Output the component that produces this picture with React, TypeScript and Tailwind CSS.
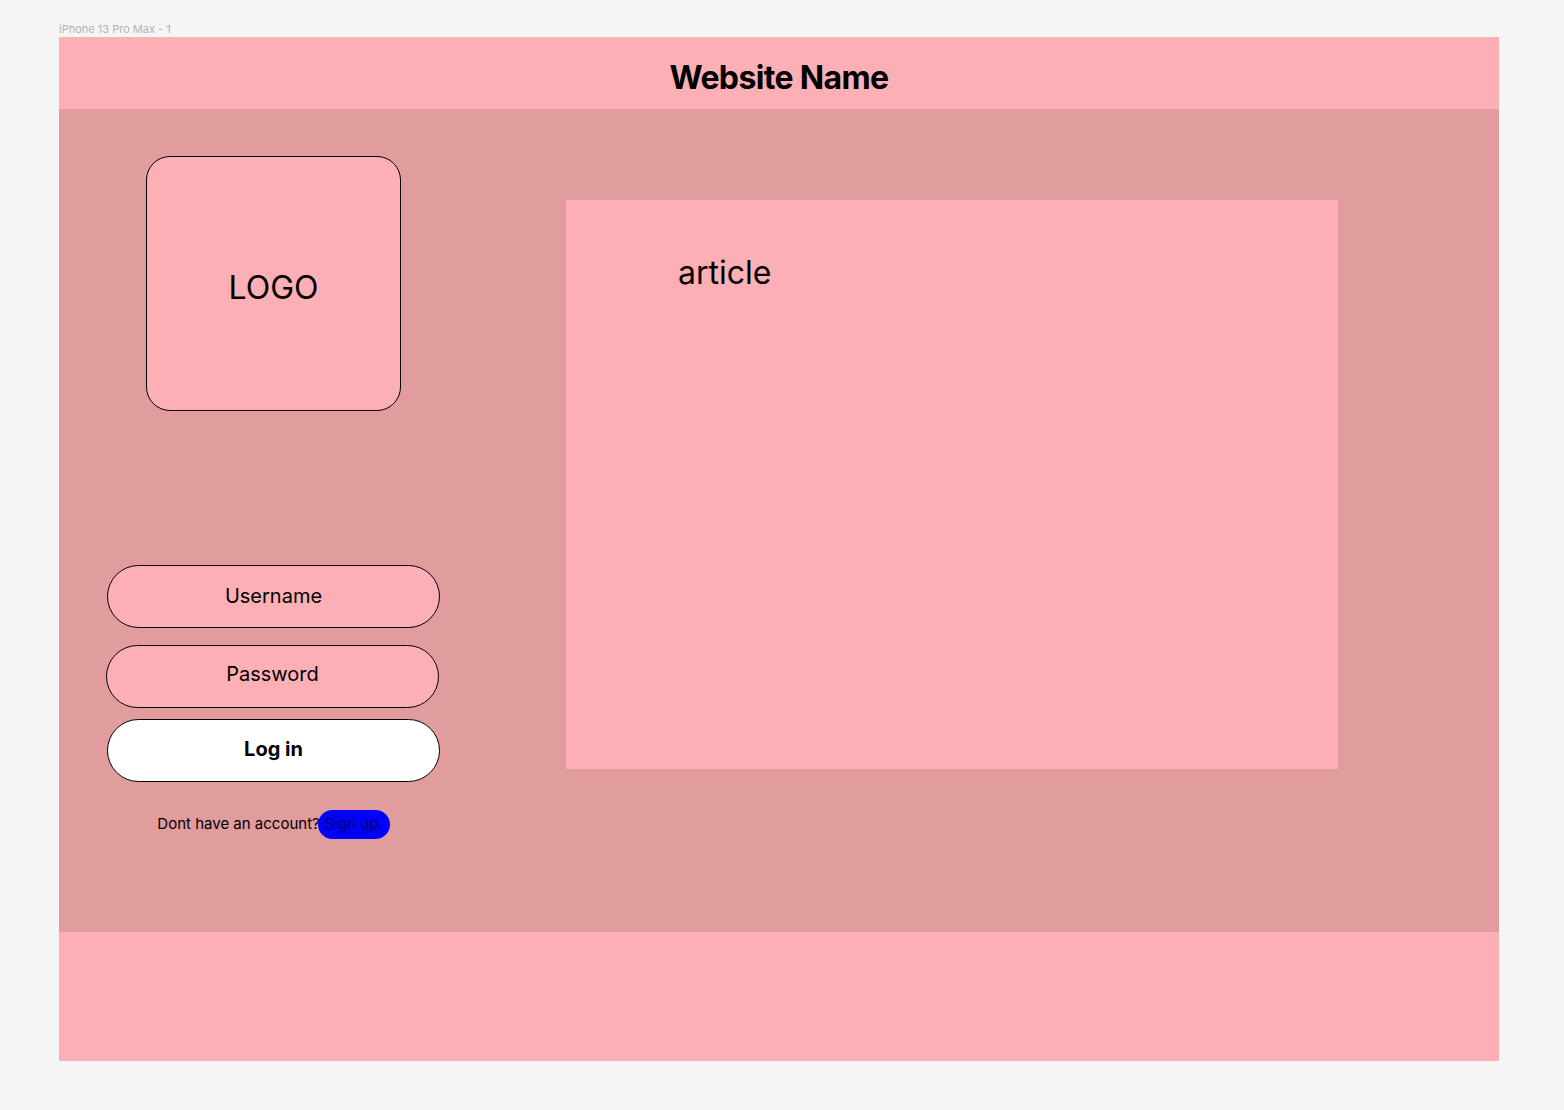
export default function App() {
  return (
    <div className="min-h-[1110px] bg-[#f5f5f5] pl-[59px] font-['Inter',sans-serif]">
      <div className="pt-[23px] mb-[1px] text-[11px] leading-[13px] text-[#b3b3b3]">iPhone 13 Pro Max - 1</div>
      <div className="w-[1440px]">
        <header className="h-[72px] bg-[#fcafb4] flex items-center justify-center pt-[10px]">
          <h1 className="text-[32px] font-bold tracking-[-0.02em] text-black">Website Name</h1>
        </header>

        <main className="h-[823px] bg-[#e19c9e] flex px-[48px]">
          <div className="w-[333px] pt-[47px] flex flex-col items-center">
            <div className="w-[255px] h-[255px] rounded-[24px] border border-black bg-[#fcafb4] flex items-center justify-center pt-[8px]">
              <span className="text-[32px] text-black">LOGO</span>
            </div>

            <div className="mt-[154px] w-full flex flex-col">
              <div className="h-[63px] rounded-full border border-black bg-[#fcafb4] flex items-center justify-center pb-[2px] text-[20px] text-black">
                Username
              </div>
              <div className="mt-[17px] -ml-[1px] mr-[1px] h-[63px] rounded-full border border-black bg-[#fcafb4] flex items-center justify-center pb-[6px] text-[20px] text-black">
                Password
              </div>
              <button className="mt-[11px] h-[63px] rounded-full border border-black bg-white flex items-center justify-center pb-[4px] text-[20px] font-bold text-black">
                Log in
              </button>
              <div className="mt-[28px] flex items-center justify-center text-[15px] text-black">
                <span>Dont have an account?</span>
                <span className="-ml-[2px] h-[29px] px-[7px] rounded-full bg-[#0000ff] flex items-center text-[15px] text-[#00006a]">Sign up.</span>
              </div>
            </div>
          </div>

          <section className="ml-[126px] mt-[91px] w-[772px] h-[569px] bg-[#fcafb4] pl-[112px] pt-[54px]">
            <p className="text-[32px] leading-[38px] text-black">article</p>
          </section>
        </main>

        <footer className="h-[129px] bg-[#fcafb4]" />
      </div>
    </div>
  );
}
